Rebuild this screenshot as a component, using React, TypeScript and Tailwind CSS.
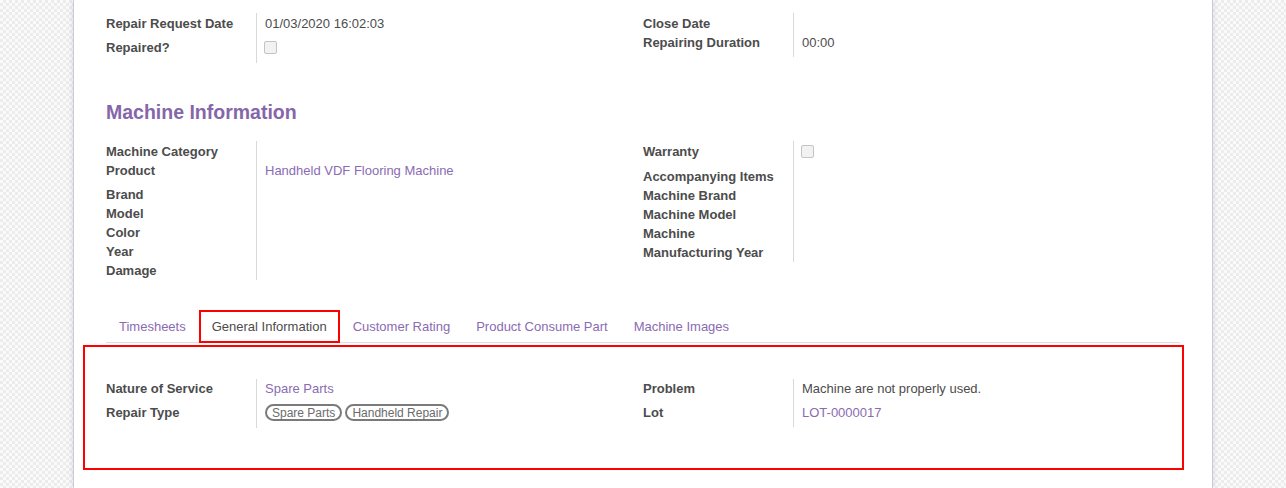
import React from "react";

const LINK = "text-[#8a6bb3]";

function Checkbox({ className = "" }: { className?: string }) {
  return (
    <div
      className={
        "h-[13px] w-[13px] rounded-[2px] border border-[#c4c4c4] bg-[#f2f2f2] " +
        className
      }
    />
  );
}

type RowProps = {
  label: string;
  h: string;
  pad?: boolean;
  children?: React.ReactNode;
};

function Row({ label, h, pad, children }: RowProps) {
  const p = pad ? " pt-[1px]" : "";
  return (
    <div className={"flex " + h}>
      <div className={"w-[150px] shrink-0 font-bold text-[#4c4c4c]" + p}>{label}</div>
      <div className={"flex-1 border-l border-[#d9d9d9] pl-[8px] text-[#4c4c4c]" + p}>
        {children}
      </div>
    </div>
  );
}

function Group({ children }: { children: React.ReactNode }) {
  return <div className="flex w-[537px] shrink-0 flex-col">{children}</div>;
}

function Tag({ children }: { children: React.ReactNode }) {
  return (
    <span className="inline-flex h-[17px] items-center rounded-full border-2 border-[#7a7a7a] px-[5px] text-[12px] leading-none text-[#6b6b6b]">
      {children}
    </span>
  );
}

export default function App() {
  const tabs = [
    "Timesheets",
    "General Information",
    "Customer Rating",
    "Product Consume Part",
    "Machine Images",
  ];
  return (
    <div
      className="h-[488px] w-full overflow-hidden bg-[repeating-conic-gradient(#ececec_0%_25%,#fafafa_0%_50%)] bg-[length:6px_6px] text-[13px] leading-[19px]"
      style={{ fontFamily: '"Liberation Sans", Arial, sans-serif' }}
    >
      <div className="mx-auto h-full w-[1140px] border-x border-[#cdc9dd] bg-white px-[32px] pt-[13px] shadow-[0_0_6px_rgba(0,0,0,0.12)]">
        {/* Top groups */}
        <div className="flex">
          <Group>
            <Row label="Repair Request Date" h="h-[24px]" pad>
              01/03/2020 16:02:03
            </Row>
            <Row label="Repaired?" h="h-[26px]" pad>
              <Checkbox className="ml-[-1px] mt-[3px]" />
            </Row>
          </Group>
          <Group>
            <div className="flex flex-col">
              <Row label="Close Date" h="h-[19px]" pad />
              <Row label="Repairing Duration" h="h-[25px]" pad>
                00:00
              </Row>
            </div>
          </Group>
        </div>

        {/* Heading */}
        <h2 className="mt-[37px] text-[19.5px] font-bold leading-[24px] text-[#8566aa]">
          Machine Information
        </h2>

        {/* Machine groups */}
        <div className="mt-[17px] flex items-start">
          <Group>
            <Row label="Machine Category" h="h-[19px]" pad />
            <Row label="Product" h="h-[24px]" pad>
              <span className={LINK}>Handheld VDF Flooring Machine</span>
            </Row>
            <Row label="Brand" h="h-[19px]" pad />
            <Row label="Model" h="h-[19px]" pad />
            <Row label="Color" h="h-[19px]" pad />
            <Row label="Year" h="h-[19px]" pad />
            <Row label="Damage" h="h-[20px]" pad />
          </Group>
          <Group>
            <Row label="Warranty" h="h-[25px]" pad>
              <Checkbox className="ml-[-1px] mt-[3px]" />
            </Row>
            <Row label="Accompanying Items" h="h-[19px]" pad />
            <Row label="Machine Brand" h="h-[19px]" pad />
            <Row label="Machine Model" h="h-[19px]" pad />
            <Row label="Machine" h="h-[19px]" pad />
            <Row label="Manufacturing Year" h="h-[20px]" pad />
          </Group>
        </div>

        {/* Tabs */}
        <div className="mt-[30px] flex border-b border-[#dedce6]">
          {tabs.map((t, i) =>
            i === 1 ? (
              <div
                key={t}
                className="mb-[-1px] flex h-[33px] items-center border-2 border-[#ff0000] px-[11px] text-[#4c4c4c]"
              >
                {t}
              </div>
            ) : (
              <div
                key={t}
                className={"flex h-[32px] items-center px-[13px] " + LINK}
              >
                {t}
              </div>
            )
          )}
        </div>

        {/* Tab content */}
        <div className="ml-[-23px] mr-[-4px] mt-[2px] border-2 border-[#ff0000] pb-[40px] pl-[21px] pr-[2px] pt-[32px]">
          <div className="flex items-start">
            <Group>
              <Row label="Nature of Service" h="h-[24px]">
                <span className={LINK}>Spare Parts</span>
              </Row>
              <Row label="Repair Type" h="h-[25px]">
                <div className="mt-[1px] flex gap-[3px]">
                  <Tag>Spare Parts</Tag>
                  <Tag>Handheld Repair</Tag>
                </div>
              </Row>
            </Group>
            <Group>
              <Row label="Problem" h="h-[24px]">
                Machine are not properly used.
              </Row>
              <Row label="Lot" h="h-[24px]">
                <span className={LINK}>LOT-0000017</span>
              </Row>
            </Group>
          </div>
        </div>
      </div>
    </div>
  );
}
